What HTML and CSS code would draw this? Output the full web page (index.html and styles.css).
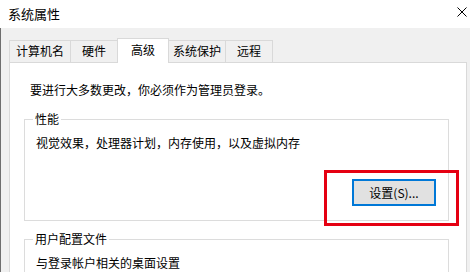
FILE: index.html
```html
<!DOCTYPE html>
<html>
<head>
    <title>系统属性</title>
    <link rel="stylesheet" href="styles.css">
</head>
<body>
<div class="titlebar">
    <span class="title">系统属性</span>
    <svg class="close" width="10" height="10" viewBox="0 0 10 10">
        <path d="M0.5 0.5 L9.5 9.5 M9.5 0.5 L0.5 9.5" stroke="#000" stroke-width="1"/>
    </svg>
</div>
<div class="dialog">
    <div class="tabs">
        <div class="tab tab-wide">计算机名</div>
        <div class="tab tab-short">硬件</div>
        <div class="tab tab-active">高级</div>
        <div class="tab tab-tight">系统保护</div>
        <div class="tab tab-short">远程</div>
    </div>
    <div class="panel">
        <p class="notice">要进行大多数更改，你必须作为管理员登录。</p>
        <fieldset class="group">
            <legend>性能</legend>
            <p class="group-text">视觉效果，处理器计划，内存使用，以及虚拟内存</p>
            <div class="btn-row">
                <span class="btn-wrap">
                    <button type="button" class="btn">设置(S)...</button>
                    <span class="highlight"></span>
                </span>
            </div>
        </fieldset>
        <fieldset class="group group-next">
            <legend>用户配置文件</legend>
            <p class="group-text">与登录帐户相关的桌面设置</p>
        </fieldset>
    </div>
</div>
</body>
</html>
```

FILE: styles.css
```css
html, body {
    margin: 0;
    padding: 0;
}
body {
    width: 470px;
    height: 272px;
    overflow: hidden;
    background: #f0f0f0;
    font-family: "Microsoft YaHei UI", "Noto Sans CJK SC", sans-serif;
    font-size: 12px;
    color: #000;
}
.titlebar {
    height: 28px;
    background: #fff;
    display: flex;
    align-items: center;
    justify-content: space-between;
    padding: 0 3px 0 8px;
    box-sizing: border-box;
}
.title {
    font-size: 13px;
    line-height: 16px;
    margin-top: -1px;
}
.close {
    margin-top: -4px;
}
.dialog {
    border-left: 1px solid #6e6e6e;
    padding: 10px 3px 0 8px;
    height: 244px;
    box-sizing: border-box;
    display: flex;
    flex-direction: column;
}
.tabs {
    display: flex;
    align-items: flex-end;
    height: 24px;
    flex: none;
    position: relative;
    z-index: 1;
}
.tab {
    height: 21px;
    line-height: 20px;
    border: 1px solid #d9d9d9;
    border-bottom: none;
    margin-right: -1px;
    background: #f0f0f0;
    text-align: center;
    white-space: nowrap;
}
.tab-wide { padding: 0 6px; }
.tab-short { padding: 0 11px; }
.tab-tight { padding: 0 4px; }
.tab-active {
    height: 24px;
    line-height: 21px;
    padding: 0 13px;
    background: #fff;
    margin-bottom: -1px;
    position: relative;
    z-index: 2;
}
.panel {
    flex: 1;
    min-height: 0;
    overflow: hidden;
    background: #fff;
    border: 1px solid #d9d9d9;
    border-bottom: none;
    padding: 19px 17px 0 14px;
}
.notice {
    margin: 0 0 13px 6px;
    line-height: 16px;
}
.group {
    margin: 0;
    padding: 0 12px 14px 11px;
    border: 1px solid #dcdcdc;
    min-width: 0;
}
.group legend {
    margin-left: -3px;
    padding: 0 2px;
    line-height: 16px;
}
.group-next {
    margin-top: 10px;
}
.group-text {
    margin: 8px 0 0;
    line-height: 16px;
}
.btn-row {
    display: flex;
    justify-content: flex-end;
    margin-top: 28px;
}
.btn-wrap {
    position: relative;
    display: inline-block;
}
.btn {
    display: block;
    width: 84px;
    height: 27px;
    background: #e1e1e1;
    border: 2px solid #0078d7;
    font-family: inherit;
    font-size: 12px;
    color: #000;
    padding: 0;
}
.highlight {
    position: absolute;
    left: -28px;
    top: -9px;
    right: -23px;
    bottom: -20px;
    border: 3px solid #e50012;
}
```
